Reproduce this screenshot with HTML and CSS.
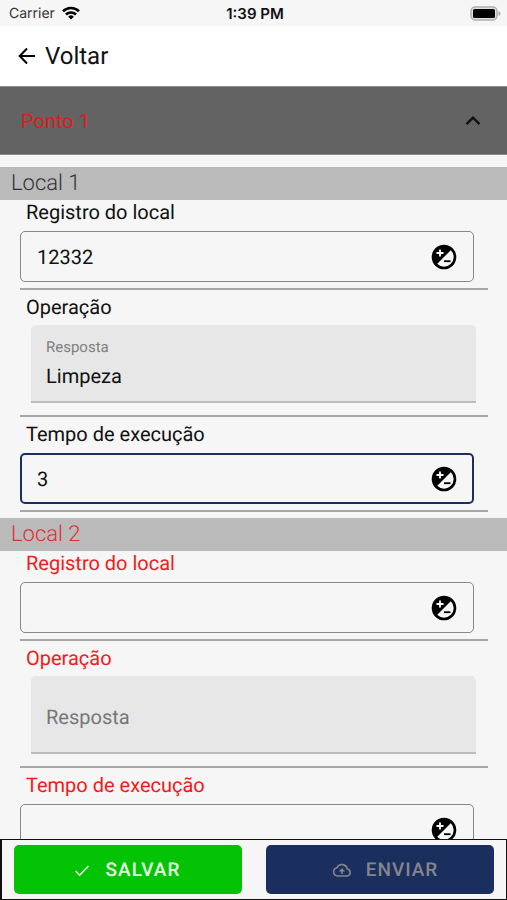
FILE: index.html
```html
<!DOCTYPE html>
<html lang="pt-BR">
<head>
  <meta charset="UTF-8">
  <meta name="viewport" content="width=device-width, initial-scale=1">
  <title>Ponto 1</title>
  <link rel="stylesheet" href="styles.css">
</head>
<body>
<svg class="sprite" aria-hidden="true">
  <symbol id="icon-contrast" viewBox="0 0 26 26">
    <circle cx="13" cy="13" r="11" fill="#f6f6f6" stroke="#000" stroke-width="2.6"/>
    <path d="M5 21A11.3 11.3 0 0 1 21 5z" fill="#000"/>
    <path d="M9 5.5v7M5.5 9h7" stroke="#fff" stroke-width="1.8"/>
    <path d="M13 17.2h6.5" stroke="#000" stroke-width="1.8"/>
  </symbol>
</svg>

<div class="status-bar">
  <div class="carrier">
    <span>Carrier</span>
    <svg width="18" height="14" viewBox="0 0 18 14" aria-hidden="true">
      <g fill="none" stroke="#000" stroke-width="2.6">
        <path d="M1 5.2a11.5 11.5 0 0 1 16 0"/>
        <path d="M4 8.5a7.2 7.2 0 0 1 10 0"/>
      </g>
      <path d="M9 13.5L6.2 10.7a4 4 0 0 1 5.6 0z"/>
    </svg>
  </div>
  <time class="clock">1:39 PM</time>
  <svg class="battery" width="31" height="15" viewBox="0 0 31 15" aria-hidden="true">
    <rect x="1" y="1" width="26" height="13" rx="4" fill="#e0e0e0" stroke="#b0b0b0" stroke-width="1.5"/>
    <rect x="3" y="3" width="22" height="9" rx="1.5"/>
    <path d="M28.5 5q2 .5 2 2.5t-2 2.5z" fill="#aaa"/>
  </svg>
</div>

<header class="header">
  <a class="back" href="#">
    <svg width="18" height="18" viewBox="0 0 18 18" fill="none" stroke="#000" stroke-width="2" aria-hidden="true">
      <path d="M17 9H2.5M9 1.5L1.7 9L9 16.5"/>
    </svg>
    Voltar
  </a>
</header>

<button class="accordion" type="button" aria-expanded="true">
  Ponto 1
  <svg width="16" height="10" viewBox="0 0 16 10" fill="none" stroke="#111" stroke-width="2.4" aria-hidden="true">
    <path d="M1.5 8.2L8 1.7l6.5 6.5"/>
  </svg>
</button>

<main class="content">
  <section>
    <h2 class="local-title">Local 1</h2>
    <div class="field">
      <label for="registro-1">Registro do local</label>
      <div class="outlined">
        <input id="registro-1" type="text" inputmode="numeric" value="12332">
        <button class="sign" type="button" aria-label="Trocar sinal"><svg><use href="#icon-contrast"/></svg></button>
      </div>
    </div>
    <div class="field field-select">
      <label for="operacao-1">Operação</label>
      <div class="filled">
        <span class="hint">Resposta</span>
        <input id="operacao-1" type="text" value="Limpeza" readonly>
      </div>
    </div>
    <div class="field">
      <label for="tempo-1">Tempo de execução</label>
      <div class="outlined active">
        <input id="tempo-1" type="text" inputmode="numeric" value="3">
        <button class="sign" type="button" aria-label="Trocar sinal"><svg><use href="#icon-contrast"/></svg></button>
      </div>
    </div>
  </section>

  <section class="pending">
    <h2 class="local-title">Local 2</h2>
    <div class="field">
      <label for="registro-2">Registro do local</label>
      <div class="outlined">
        <input id="registro-2" type="text" inputmode="numeric">
        <button class="sign" type="button" aria-label="Trocar sinal"><svg><use href="#icon-contrast"/></svg></button>
      </div>
    </div>
    <div class="field field-select">
      <label for="operacao-2">Operação</label>
      <div class="filled empty">
        <input id="operacao-2" type="text" placeholder="Resposta" readonly>
      </div>
    </div>
    <div class="field">
      <label for="tempo-2">Tempo de execução</label>
      <div class="outlined">
        <input id="tempo-2" type="text" inputmode="numeric">
        <button class="sign" type="button" aria-label="Trocar sinal"><svg><use href="#icon-contrast"/></svg></button>
      </div>
    </div>
  </section>
</main>

<footer class="actions">
  <button class="btn btn-save" type="button">
    <svg width="20" height="20" viewBox="0 0 20 20" fill="none" stroke="currentColor" stroke-width="1.6" aria-hidden="true">
      <path d="M3.5 11l4.2 4.2L16.5 6"/>
    </svg>
    SALVAR
  </button>
  <button class="btn btn-send" type="button" disabled>
    <svg width="20" height="20" viewBox="0 0 20 20" fill="none" stroke="currentColor" stroke-width="1.6" aria-hidden="true">
      <path d="M5.5 16a4.2 4.2 0 0 1-.5-8.3a5.4 5.4 0 0 1 10.2 1.3a3.6 3.6 0 0 1 .3 7z"/>
      <path d="M10 14v-3.5"/>
      <path d="M6.8 11.5L10 8l3.2 3.5z" fill="currentColor" stroke="none"/>
    </svg>
    ENVIAR
  </button>
</footer>
</body>
</html>
```

FILE: styles.css
```css
* {
  box-sizing: border-box;
}
body {
  margin: 0;
  height: 100vh;
  display: flex;
  flex-direction: column;
  background: #f6f6f6;
  color: #111;
  font-family: Roboto, sans-serif;
  font-size: 20px;
  text-rendering: geometricPrecision;
}
button,
input {
  font: inherit;
  color: inherit;
  text-rendering: inherit;
}
.sprite {
  display: none;
}

/* status bar */
.status-bar {
  flex: none;
  display: grid;
  grid-template-columns: 1fr auto 1fr;
  align-items: center;
  height: 26px;
  padding: 0 6px 0 9px;
  font-family: Inter, sans-serif;
  font-size: 14px;
}
.carrier {
  display: flex;
  align-items: center;
  gap: 7px;
  color: #333;
}
.clock {
  font-size: 15px;
  font-weight: 600;
}
.battery {
  justify-self: end;
}

/* header */
.header {
  flex: none;
  display: flex;
  align-items: center;
  height: 60px;
  padding: 0 18px;
  background: #fff;
}
.back {
  display: flex;
  align-items: center;
  gap: 9px;
  color: #111;
  font-size: 24px;
  text-decoration: none;
}
.accordion {
  flex: none;
  display: flex;
  justify-content: space-between;
  align-items: center;
  height: 69px;
  padding: 0 26px 0 21px;
  border: solid #8f8f8f;
  border-width: 1px 0;
  background: #636363;
  color: #e01b1b;
  text-align: left;
}

/* form */
.content {
  flex: 1;
  min-height: 0;
  padding-top: 12px;
  overflow: hidden;
}
.local-title {
  margin: 0;
  padding: 1px 0 0 11px;
  background: #bababa;
  color: #333;
  font-size: 22px;
  font-weight: 300;
  line-height: 32px;
}
.field {
  margin: 0 19px 5px 20px;
  padding-bottom: 6px;
  border-bottom: 2px solid #a8a8a8;
}
.field:last-child {
  margin-bottom: 6px;
}
.field label {
  display: block;
  padding-left: 6px;
  line-height: 24px;
}
.field-select {
  padding-bottom: 12px;
}
.outlined {
  display: flex;
  align-items: center;
  height: 51px;
  margin: 7px 14px 0 0;
  padding: 0 16px;
  border: 1px solid #888;
  border-radius: 5px;
}
.outlined.active {
  padding: 0 15px;
  border: 2px solid #1b2f5e;
}
.outlined input {
  flex: 1;
  min-width: 0;
  padding: 0;
  border: none;
  outline: none;
  background: none;
}
.sign {
  display: flex;
  padding: 0;
  border: none;
  background: none;
  cursor: pointer;
}
.sign svg {
  width: 26px;
  height: 26px;
}
.filled {
  display: flex;
  flex-direction: column;
  justify-content: center;
  gap: 8px;
  height: 78px;
  margin: 6px 12px 0 11px;
  padding: 0 15px;
  border-bottom: 2px solid #bcbcbc;
  border-radius: 5px 5px 0 0;
  background: #e7e7e7;
}
.filled.empty {
  padding-top: 6px;
}
.filled input {
  width: 100%;
  padding: 0;
  border: none;
  outline: none;
  background: none;
}
.filled input::placeholder {
  color: #777;
}
.hint {
  color: #808080;
  font-size: 15px;
}
.pending .local-title {
  color: #e03030;
}
.pending label {
  color: #f01c1c;
}

/* bottom buttons */
.actions {
  flex: none;
  display: grid;
  grid-template-columns: 1fr 1fr;
  gap: 24px;
  padding: 5px 12px;
  border: 1px solid #111;
  border-left-width: 2px;
}
.btn {
  display: flex;
  justify-content: center;
  align-items: center;
  gap: 14px;
  height: 49px;
  border: none;
  border-radius: 5px;
  font-size: 19px;
  font-weight: 500;
  letter-spacing: 1px;
  cursor: pointer;
}
.btn-save {
  padding: 0 4px 0 0;
  background: #04c304;
  color: #e4fbe4;
}
.btn-send {
  padding: 0 0 0 10px;
  background: #1b2f5e;
  color: #85858c;
}
```
